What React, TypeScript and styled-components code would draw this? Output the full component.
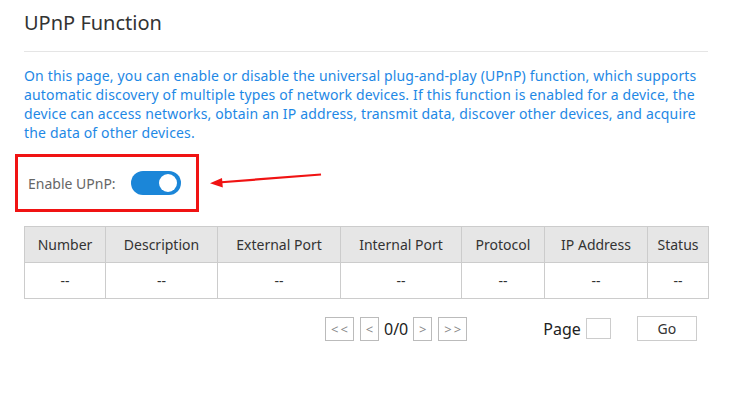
import React from 'react';
import styled, {createGlobalStyle} from 'styled-components';

const GlobalStyle = createGlobalStyle`
  html, body {
    margin: 0;
    padding: 0;
    background: #fff;
  }
  body {
    font-family: "Noto Sans", "Open Sans", sans-serif;
    color: #333;
  }
`;

const columns = [
    {title: 'Number', width: 81},
    {title: 'Description', width: 112},
    {title: 'External Port', width: 123},
    {title: 'Internal Port', width: 121},
    {title: 'Protocol', width: 83},
    {title: 'IP Address', width: 103},
    {title: 'Status', width: 61},
];

const App = () => {
    return (
        <Page>
            <GlobalStyle/>
            <Title>UPnP Function</Title>
            <Intro>
                On this page, you can enable or disable the universal plug-and-play (UPnP) function, which supports<br/>
                automatic discovery of multiple types of network devices. If this function is enabled for a device, the<br/>
                device can access networks, obtain an IP address, transmit data, discover other devices, and acquire<br/>
                the data of other devices.
            </Intro>
            <ToggleArea>
                <Highlight>
                    <Label>Enable UPnP:</Label>
                    <Switch $on>
                        <Knob/>
                    </Switch>
                </Highlight>
                <Arrow width="112" height="20" viewBox="0 0 112 20">
                    <line x1="8" y1="12.5" x2="111" y2="4.5" stroke="#f01313" strokeWidth="2.2"/>
                    <polygon points="0,13.2 12,8 12.8,17.6" fill="#f01313"/>
                </Arrow>
            </ToggleArea>
            <Table>
                <colgroup>
                    {columns.map(c => <col key={c.title} style={{width: c.width}}/>)}
                </colgroup>
                <thead>
                <tr>
                    {columns.map(c => <Th key={c.title}>{c.title}</Th>)}
                </tr>
                </thead>
                <tbody>
                <tr>
                    {columns.map(c => <Td key={c.title}>--</Td>)}
                </tr>
                </tbody>
            </Table>
            <Pager>
                <Nav>
                    <PageBtn $w={29}>&lt;&lt;</PageBtn>
                    <PageBtn $w={19}>&lt;</PageBtn>
                    <Count>0/0</Count>
                    <PageBtn $w={19}>&gt;</PageBtn>
                    <PageBtn $w={29}>&gt;&gt;</PageBtn>
                </Nav>
                <Jump>
                    <JumpLabel>Page</JumpLabel>
                    <PageInput/>
                    <GoBtn>Go</GoBtn>
                </Jump>
            </Pager>
        </Page>
    )
};

const Page = styled.div`
  width: 684px;
  padding: 9px 0 40px 24px;
`;

const Title = styled.h2`
  margin: 0;
  padding-bottom: 14px;
  font-size: 20px;
  font-weight: 400;
  line-height: 28px;
  color: #333;
  border-bottom: 1px solid #e5e5e5;
`;

const Intro = styled.p`
  margin: 14px 0 0;
  font-size: 14px;
  line-height: 19px;
  letter-spacing: 0.16px;
  white-space: nowrap;
  color: #1e88e5;
`;

const ToggleArea = styled.div`
  position: relative;
  margin-top: 12px;
  margin-left: -9px;
`;

const Highlight = styled.div`
  display: inline-flex;
  align-items: center;
  box-sizing: border-box;
  width: 184px;
  height: 58px;
  padding: 0 0 0 10px;
  border: 3px solid #f01313;
`;

const Label = styled.span`
  font-size: 14px;
  color: #666;
  width: 103px;
`;

const Switch = styled.span<{ $on?: boolean }>`
  position: relative;
  display: inline-block;
  width: 50px;
  height: 24px;
  border-radius: 12px;
  background: ${({$on}) => ($on ? '#1b86d8' : '#ccc')};
`;

const Knob = styled.span`
  position: absolute;
  top: 3px;
  right: 4px;
  width: 18px;
  height: 18px;
  border-radius: 50%;
  background: #fff;
`;

const Arrow = styled.svg`
  position: absolute;
  left: 195px;
  top: 16px;
`;

const Table = styled.table`
  width: 684px;
  margin-top: 14px;
  border-collapse: collapse;
  table-layout: fixed;
  font-size: 14px;
`;

const Th = styled.th`
  height: 35px;
  padding: 0;
  font-weight: 400;
  color: #333;
  background: #e6e6e6;
  border: 1px solid #ccc;
  text-align: center;
`;

const Td = styled.td`
  height: 35px;
  padding: 0;
  color: #333;
  border: 1px solid #ccc;
  text-align: center;
`;

const Pager = styled.div`
  display: flex;
  align-items: center;
  margin-top: 17px;
  padding-left: 301px;
`;

const Nav = styled.div`
  display: flex;
  align-items: center;
  gap: 6px;
`;

const PageBtn = styled.button<{ $w: number }>`
  box-sizing: border-box;
  width: ${({$w}) => $w}px;
  height: 24px;
  padding: 0;
  background: #fff;
  border: 1px solid #bbb;
  color: #888;
  font-family: "Noto Sans", sans-serif;
  font-size: 13px;
  letter-spacing: 2px;
  text-indent: 2px;
`;

const Count = styled.span`
  font-size: 16px;
  color: #222;
  margin: 0 -1px;
`;

const Jump = styled.div`
  display: flex;
  align-items: center;
  margin-left: 76px;
`;

const JumpLabel = styled.span`
  font-size: 16px;
  color: #222;
`;

const PageInput = styled.input`
  box-sizing: border-box;
  width: 25px;
  height: 21px;
  margin-left: 5px;
  border: 1px solid #ccc;
  padding: 0;
`;

const GoBtn = styled.button`
  box-sizing: border-box;
  width: 60px;
  height: 25px;
  margin-left: 26px;
  background: #fff;
  border: 1px solid #ccc;
  color: #333;
  font-family: "Noto Sans", sans-serif;
  font-size: 14px;
`;

export default App;
